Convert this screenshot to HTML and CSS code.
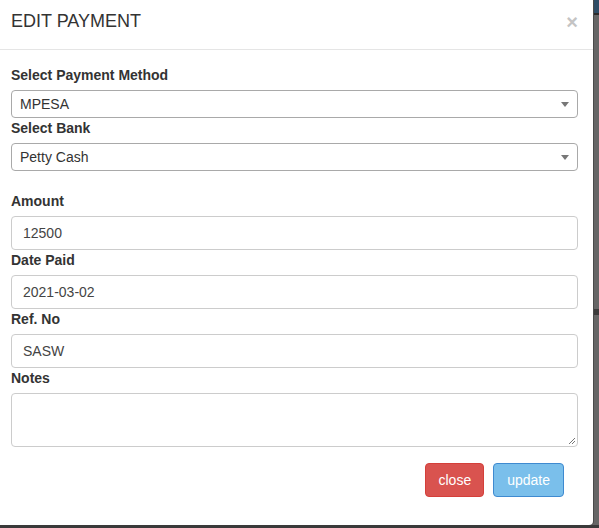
FILE: index.html
```html
<!DOCTYPE html>
<html>
<head>
<meta charset="utf-8">
<link rel="stylesheet" href="styles.css">
</head>
<body>
<div class="modal">
  <div class="modal-header">
    <h4 class="modal-title">EDIT PAYMENT</h4>
    <span class="close">&times;</span>
  </div>
  <div class="modal-body">
    <label class="lbl">Select Payment Method</label>
    <div class="select"><span>MPESA</span><span class="caret"></span></div>
    <label class="lbl">Select Bank</label>
    <div class="select"><span>Petty Cash</span><span class="caret"></span></div>
    <div class="spacer"></div>
    <label class="lbl">Amount</label>
    <div class="input">12500</div>
    <label class="lbl">Date Paid</label>
    <div class="input">2021-03-02</div>
    <label class="lbl">Ref. No</label>
    <div class="input">SASW</div>
    <label class="lbl">Notes</label>
    <div class="textarea">
      <svg class="grip" width="9" height="9" viewBox="0 0 9 9"><path d="M8 2 L2 8 M8 5 L5 8" stroke="#777" stroke-width="1"/></svg>
    </div>
    <div class="actions">
      <span class="btn btn-close">close</span>
      <span class="btn btn-update">update</span>
    </div>
  </div>
</div>
</body>
</html>
```
FILE: styles.css
```css
html, body {
  margin: 0;
  padding: 0;
}
body {
  width: 599px;
  height: 528px;
  overflow: hidden;
  font-family: "Liberation Sans", Arial, sans-serif;
  background: linear-gradient(to bottom,
    #2f4d66 0, #2f4d66 13px,
    #2b2b2b 13px, #2b2b2b 15px,
    #666 15px, #666 309px,
    #3c3c3c 309px, #3c3c3c 315px,
    #666 315px, #666 525px,
    #3a3a3a 525px);
}
.modal {
  width: 593px;
  height: 525px;
  background: #fff;
  border-radius: 0 0 4px 0;
  box-shadow: 1px 0 0 #4a4a4a;
  box-sizing: border-box;
}
.modal-header {
  display: flex;
  justify-content: space-between;
  align-items: flex-start;
  padding: 11px 15px 18px 11px;
  border-bottom: 1px solid #e5e5e5;
}
.modal-title {
  margin: 0;
  font-size: 18px;
  line-height: 20px;
  font-weight: normal;
  color: #333;
}
.close {
  font-size: 20px;
  font-weight: bold;
  line-height: 16px;
  color: #c4c4c4;
  margin-top: 3px;
}
.modal-body {
  padding: 15px 15px 0 11px;
  display: flex;
  flex-direction: column;
}
.lbl {
  display: block;
  font-size: 14px;
  font-weight: bold;
  line-height: 20px;
  color: #333;
  margin-bottom: 5px;
}
.select {
  height: 28px;
  box-sizing: border-box;
  border: 1px solid #a9a9a9;
  border-radius: 4px;
  padding: 0 8px 0 8px;
  display: flex;
  align-items: center;
  justify-content: space-between;
  font-size: 14px;
  color: #333;
}
.caret {
  width: 0;
  height: 0;
  border-left: 4px solid transparent;
  border-right: 4px solid transparent;
  border-top: 5px solid #777;
}
.spacer {
  height: 20px;
}
.input {
  height: 34px;
  box-sizing: border-box;
  border: 1px solid #ccc;
  border-radius: 4px;
  padding: 0 11px;
  display: flex;
  align-items: center;
  font-size: 14px;
  color: #444;
}
.textarea {
  height: 54px;
  box-sizing: border-box;
  border: 1px solid #ccc;
  border-radius: 4px;
  position: relative;
}
.grip {
  position: absolute;
  right: 1px;
  bottom: 1px;
}
.actions {
  display: flex;
  justify-content: flex-end;
  gap: 9px;
  margin-top: 16px;
  margin-right: 14px;
}
.btn {
  display: inline-block;
  height: 34px;
  box-sizing: border-box;
  padding: 0 12px;
  line-height: 32px;
  font-size: 14px;
  color: #fff;
  border-radius: 4px;
  border: 1px solid transparent;
}
.btn-close {
  background: #d9534f;
  border-color: #d43f3a;
}
.btn-update {
  background: #7abfeb;
  border-color: #3f8ad0;
  padding: 0 13px;
}
```
